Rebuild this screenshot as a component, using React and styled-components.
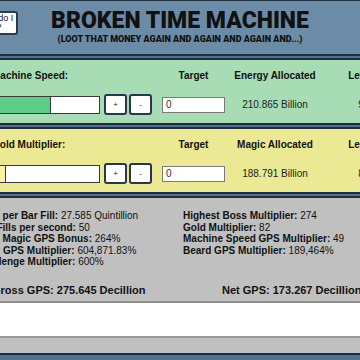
import styled, { createGlobalStyle } from "styled-components";

const GlobalStyle = createGlobalStyle`
  html, body {
    margin: 0;
    padding: 0;
    background: #4f7290;
    overflow: hidden;
  }
  body {
    font-family: "Liberation Sans", Arial, sans-serif;
    color: #111;
  }
`;

const machines = [
  {
    label: "Machine Speed:",
    bg: "#a7dcb5",
    fill: "#5ecb87",
    pct: 55,
    alloc: "Energy Allocated",
    value: "210.865 Billion",
    level: "9",
  },
  {
    label: "Gold Multiplier:",
    bg: "#ebe993",
    fill: "#f7f3a8",
    pct: 12,
    alloc: "Magic Allocated",
    value: "188.791 Billion",
    level: "8",
  },
];

const leftStats = [
  ["Gold per Bar Fill:", "27.585 Quintillion"],
  ["Bar Fills per second:", "50"],
  ["Gold Magic GPS Bonus:", "264%"],
  ["Total GPS Multiplier:", "604,871.83%"],
  ["Challenge Multiplier:", "600%"],
];

const rightStats = [
  ["Highest Boss Multiplier:", "274"],
  ["Gold Multiplier:", "82"],
  ["Machine Speed GPS Multiplier:", "49"],
  ["Beard GPS Multiplier:", "189,464%"],
];

const App = () => {
  return (
    <>
      <GlobalStyle />
      <Page>
        <Header>
          <HelpCell>
            <HelpButton>What do I do?</HelpButton>
          </HelpCell>
          <TitleBlock>
            <Title>BROKEN TIME MACHINE</Title>
            <Subtitle>(LOOT THAT MONEY AGAIN AND AGAIN AND AGAIN AND...)</Subtitle>
          </TitleBlock>
          <div />
        </Header>

        {machines.map((m) => (
          <Panel key={m.label} $bg={m.bg}>
            <Label>{m.label}</Label>
            <span />
            <ColHead>Target</ColHead>
            <ColHead>{m.alloc}</ColHead>
            <ColHead>Level</ColHead>

            <Bar>
              <Fill $color={m.fill} style={{ width: `${m.pct}%` }} />
            </Bar>
            <Buttons>
              <SmallButton>+</SmallButton>
              <SmallButton>-</SmallButton>
            </Buttons>
            <TargetInput readOnly value="0" />
            <Value>{m.value}</Value>
            <Value>{m.level}</Value>
          </Panel>
        ))}

        <StatsPanel>
          <StatsGrid>
            <StatList>
              {leftStats.map(([k, v]) => (
                <StatLine key={k}>
                  <b>{k}</b> {v}
                </StatLine>
              ))}
            </StatList>
            <StatList>
              {rightStats.map(([k, v]) => (
                <StatLine key={k}>
                  <b>{k}</b> {v}
                </StatLine>
              ))}
            </StatList>
          </StatsGrid>
          <GpsRow>
            <span>Gross GPS: 275.645 Decillion</span>
            <span>Net GPS: 173.267 Decillion</span>
          </GpsRow>
          <LogBox />
          <Footer />
        </StatsPanel>
      </Page>
    </>
  );
};

const Page = styled.div`
  width: 480px;
  margin-left: -60px;
  display: flex;
  flex-direction: column;
  gap: 2px;
`;

const Header = styled.header`
  display: grid;
  grid-template-columns: 1fr auto 1fr;
  align-items: start;
  background: #6b8ba7;
  border-top: 1px solid #1e2d3b;
  border-bottom: 2px solid #1e2d3b;
  padding: 8px 0 10px;
`;

const HelpCell = styled.div`
  padding-left: 30px;
  padding-top: 2px;
`;

const HelpButton = styled.button`
  width: 48px;
  height: 24px;
  padding: 1px 2px;
  background: #fff;
  border: 2px solid #2a3a4a;
  border-radius: 3px;
  font-family: "Liberation Sans", Arial, sans-serif;
  font-size: 9px;
  line-height: 9px;
  color: #111;
  text-align: center;
`;

const TitleBlock = styled.div`
  display: flex;
  flex-direction: column;
  align-items: center;
  gap: 2px;
`;

const Title = styled.h1`
  margin: 0;
  font-family: Roboto, "Liberation Sans", sans-serif;
  font-weight: 900;
  font-size: 23px;
  line-height: 23px;
  color: #111;
`;

const Subtitle = styled.div`
  font-family: Roboto, "Liberation Sans", sans-serif;
  font-weight: 900;
  font-size: 9px;
  line-height: 10px;
  color: #111;
`;

const Panel = styled.section`
  display: grid;
  grid-template-columns: 112px 58px 63px 100px 72px;
  grid-template-rows: 12px 21px;
  row-gap: 12px;
  align-items: center;
  padding: 10px 0 8px 52px;
  background: ${(p) => p.$bg};
  border-top: 2px solid #1e2d3b;
  border-bottom: 2px solid #1e2d3b;
`;

const Label = styled.div`
  font-size: 10px;
  font-weight: bold;
  line-height: 12px;
  white-space: nowrap;
`;

const ColHead = styled.div`
  font-size: 10px;
  font-weight: bold;
  line-height: 12px;
  text-align: center;
  white-space: nowrap;
`;

const Bar = styled.div`
  width: 108px;
  height: 18px;
  box-sizing: border-box;
  background: #fff;
  border: 1px solid #3a3a3a;
`;

const Fill = styled.div`
  height: 100%;
  background: ${(p) => p.$color};
  border-right: 1px solid #3a3a3a;
  box-sizing: border-box;
`;

const Buttons = styled.div`
  display: flex;
  gap: 2px;
  height: 21px;
`;

const SmallButton = styled.button`
  width: 23px;
  height: 21px;
  padding: 0;
  background: #fff;
  border: 2px solid #26384a;
  border-radius: 3px;
  font-family: "Liberation Sans", Arial, sans-serif;
  font-size: 8px;
  color: #222;
`;

const TargetInput = styled.input`
  width: 63px;
  height: 16px;
  box-sizing: border-box;
  border: 1px solid #7a7a7a;
  padding: 0 3px;
  font-family: "Liberation Sans", Arial, sans-serif;
  font-size: 10px;
  color: #333;
  background: #fff;
  outline: none;
`;

const Value = styled.div`
  font-size: 10px;
  text-align: center;
  white-space: nowrap;
  color: #222;
`;

const StatsPanel = styled.section`
  background: #c0c0c0;
  border-top: 2px solid #1e2d3b;
  border-bottom: 2px solid #1e2d3b;
  padding-top: 12px;
`;

const StatsGrid = styled.div`
  display: grid;
  grid-template-columns: 206px 1fr;
  padding-left: 37px;
`;

const StatList = styled.div`
  display: flex;
  flex-direction: column;
`;

const StatLine = styled.div`
  font-size: 10px;
  line-height: 11.5px;
  white-space: nowrap;
  color: #111;
`;

const GpsRow = styled.div`
  display: grid;
  grid-template-columns: 230px 1fr;
  padding: 0 0 4px 52px;
  margin-top: 16px;
  font-size: 11px;
  font-weight: bold;
  line-height: 13px;
  white-space: nowrap;
`;

const LogBox = styled.div`
  height: 33px;
  background: #fff;
  border-top: 2px solid #8e8e8e;
  border-bottom: 2px solid #9a9a9a;
`;

const Footer = styled.div`
  height: 15px;
`;

export default App;
